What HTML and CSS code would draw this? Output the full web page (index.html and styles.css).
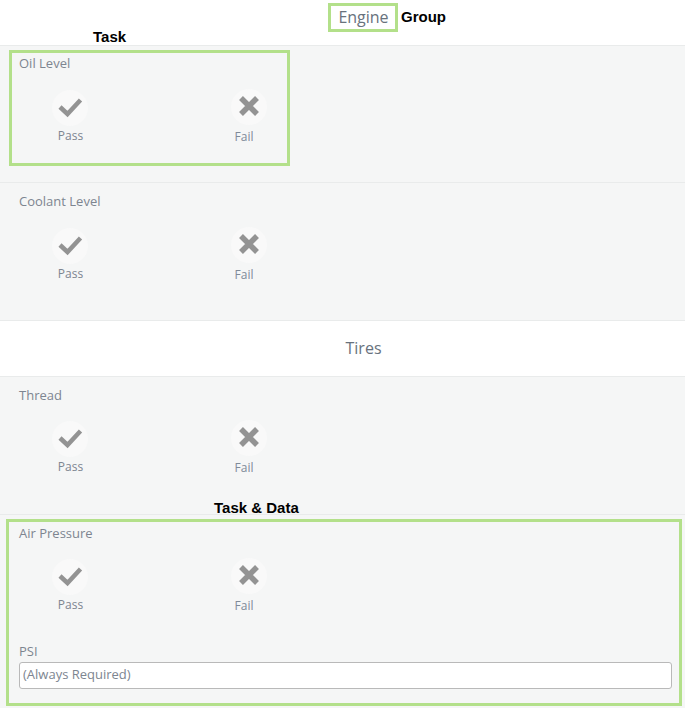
FILE: index.html
```html
<!DOCTYPE html>
<html lang="en">
<head>
  <meta charset="UTF-8">
  <title>Inspection</title>
  <link rel="stylesheet" href="styles.css">
</head>
<body>

<div class="page">
  <h2 class="group-title group-first">Engine</h2>

  <section class="task">
    <div class="task-label">Oil Level</div>
    <div class="options">
      <div class="option pass">
        <span class="icon"><svg width="36" height="36" viewBox="0 0 36 36"><polyline points="8,17 15.500,24 28.500,10"/></svg></span>
        <span class="option-label">Pass</span>
      </div>
      <div class="option fail">
        <span class="icon"><svg width="36" height="36" viewBox="0 0 36 36"><path d="M10 9 L26 25 M26 9 L10 25"/></svg></span>
        <span class="option-label">Fail</span>
      </div>
    </div>
  </section>

  <section class="task">
    <div class="task-label">Coolant Level</div>
    <div class="options">
      <div class="option pass">
        <span class="icon"><svg width="36" height="36" viewBox="0 0 36 36"><polyline points="8,17 15.500,24 28.500,10"/></svg></span>
        <span class="option-label">Pass</span>
      </div>
      <div class="option fail">
        <span class="icon"><svg width="36" height="36" viewBox="0 0 36 36"><path d="M10 9 L26 25 M26 9 L10 25"/></svg></span>
        <span class="option-label">Fail</span>
      </div>
    </div>
  </section>

  <h2 class="group-title">Tires</h2>

  <section class="task">
    <div class="task-label">Thread</div>
    <div class="options">
      <div class="option pass">
        <span class="icon"><svg width="36" height="36" viewBox="0 0 36 36"><polyline points="8,17 15.500,24 28.500,10"/></svg></span>
        <span class="option-label">Pass</span>
      </div>
      <div class="option fail">
        <span class="icon"><svg width="36" height="36" viewBox="0 0 36 36"><path d="M10 9 L26 25 M26 9 L10 25"/></svg></span>
        <span class="option-label">Fail</span>
      </div>
    </div>
  </section>

  <section class="task task-data">
    <div class="task-label">Air Pressure</div>
    <div class="options">
      <div class="option pass">
        <span class="icon"><svg width="36" height="36" viewBox="0 0 36 36"><polyline points="8,17 15.500,24 28.500,10"/></svg></span>
        <span class="option-label">Pass</span>
      </div>
      <div class="option fail">
        <span class="icon"><svg width="36" height="36" viewBox="0 0 36 36"><path d="M10 9 L26 25 M26 9 L10 25"/></svg></span>
        <span class="option-label">Fail</span>
      </div>
    </div>
    <label class="data-label" for="psi">PSI</label>
    <input id="psi" class="data-input" type="text" placeholder="(Always Required)">
  </section>

  <!-- annotations on top of the form -->
  <div class="mark mark-engine"></div>
  <div class="mark mark-task"></div>
  <div class="mark mark-data"></div>
  <span class="note note-group">Group</span>
  <span class="note note-task">Task</span>
  <span class="note note-data">Task &amp; Data</span>
</div>

</body>
</html>
```

FILE: styles.css
```css
html, body {
  margin: 0;
  padding: 0;
  background: #fff;
}

.page {
  position: relative;
  width: 685px;
  height: 708px;
  overflow: hidden;
  font-family: "Open Sans", sans-serif;
  font-size: 13px;
  color: #7d8590;
}

.group-title {
  margin: 0;
  height: 55px;
  line-height: 55px;
  padding-left: 42px;
  text-align: center;
  font-size: 16px;
  font-weight: 400;
  color: #68727d;
}

.group-first {
  height: 45px;
  line-height: 35px;
}

.task {
  height: 138px;
  box-sizing: border-box;
  padding: 9px 13px 0 19px;
  background: #f5f6f6;
  border-top: 1px solid #e9ebeb;
}

.group-first + .task {
  height: 137px;
  padding-top: 8px;
}

.task-data {
  height: 194px;
}

.task + .group-title {
  border-top: 1px solid #e9ebeb;
}

.task-label {
  line-height: 18px;
}

.options {
  display: flex;
  margin-top: 17px;
  padding-left: 33px;
}

.group-first + .task .options,
.group-first + .task + .task .options {
  margin-top: 18px;
}

.option {
  display: flex;
  flex-direction: column;
  align-items: center;
  width: 36px;
}

.fail {
  margin-left: 143px;
  margin-top: -1px;
}

.icon {
  display: block;
  width: 36px;
  height: 36px;
  border-radius: 50%;
  background: #f9f9f9;
}

.icon svg {
  display: block;
  fill: none;
  stroke: #939393;
  stroke-width: 4.5;
}

.fail .icon svg {
  stroke-width: 5.5;
}

.option-label {
  margin-top: 1px;
  line-height: 18px;
  font-size: 12px;
  white-space: nowrap;
}

.pass .option-label {
  margin-left: 1px;
}

.fail .option-label {
  margin-top: 3px;
  margin-right: 10px;
  color: #7e8a99;
}

.data-label {
  display: block;
  margin-top: 27px;
  line-height: 18px;
}

.data-input {
  display: block;
  box-sizing: border-box;
  width: 653px;
  height: 27px;
  margin: 2px 0 0;
  padding: 0 3px 4px;
  background: #fff;
  border: 1px solid #b9b9b9;
  border-radius: 3px;
  font-family: "Open Sans", sans-serif;
  font-size: 13px;
  color: #7d8590;
}

.data-input::placeholder {
  color: #7d8590;
  opacity: 1;
}

.mark {
  position: absolute;
  box-sizing: border-box;
  border: 3px solid #b3e08a;
}

.mark-engine {
  left: 328px;
  top: 3px;
  width: 70px;
  height: 29px;
}

.mark-task {
  left: 9px;
  top: 50px;
  width: 281px;
  height: 116px;
}

.mark-data {
  left: 6px;
  top: 519px;
  width: 676px;
  height: 187px;
}

.note {
  position: absolute;
  font-family: "Liberation Sans", Arial, sans-serif;
  font-size: 15px;
  font-weight: 700;
  line-height: 16px;
  color: #000;
}

.note-group {
  left: 401px;
  top: 9px;
}

.note-task {
  left: 93px;
  top: 29px;
}

.note-data {
  left: 214px;
  top: 500px;
}
```
